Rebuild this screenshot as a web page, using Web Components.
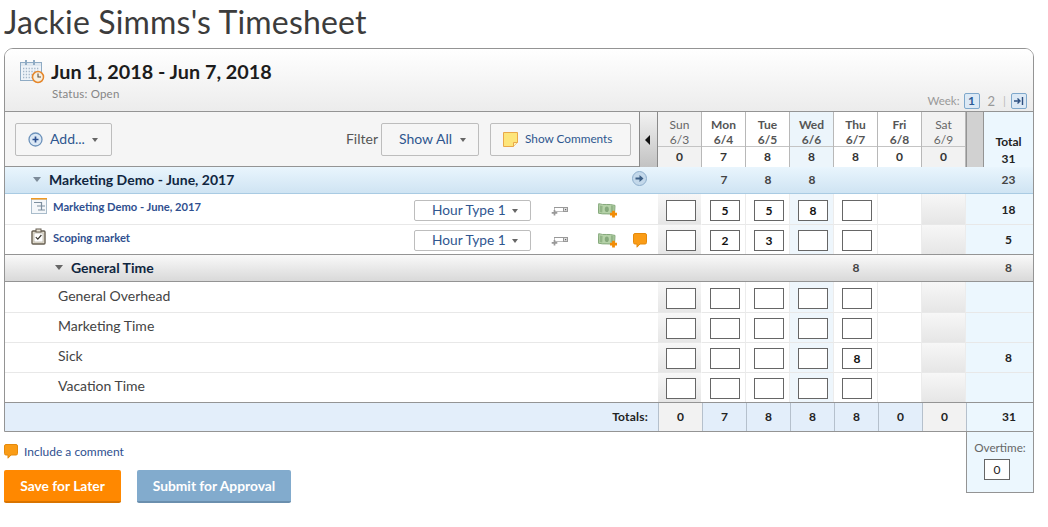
<!DOCTYPE html>
<html lang="en">
<head>
<meta charset="utf-8">
<title>Timesheet</title>
<style>
  html, body { margin: 0; background: #fff; }
  body { font-family: Lato, "Open Sans", sans-serif; color: #333; }
  ts-page { width: 1048px; }
</style>
</head>
<body>
<ts-page>
  <ts-title>Jackie Simms's Timesheet</ts-title>
  <ts-panel>
    <ts-header range="Jun 1, 2018 - Jun 7, 2018" status="Status: Open"></ts-header>
    <ts-toolbar></ts-toolbar>
    <ts-group-row label="Marketing Demo - June, 2017" hours="|7|8|8|||" total="23" tone="blue" link></ts-group-row>
    <ts-task-row label="Marketing Demo - June, 2017" icon="plan" hours="|5|5|8|" total="18" first></ts-task-row>
    <ts-task-row label="Scoping market" icon="task" hours="|2|3||" total="5" comment last></ts-task-row>
    <ts-group-row label="General Time" hours="||||8||" total="8" tone="gray" indent></ts-group-row>
    <ts-time-row label="General Overhead" hours="||||" first></ts-time-row>
    <ts-time-row label="Marketing Time" hours="||||"></ts-time-row>
    <ts-time-row label="Sick" hours="||||8" total="8"></ts-time-row>
    <ts-time-row label="Vacation Time" hours="||||" last></ts-time-row>
    <ts-totals-row values="0|7|8|8|8|0|0" total="31"></ts-totals-row>
  </ts-panel>
  <ts-footer></ts-footer>
</ts-page>

<script>
const ICONS = {
  calendar: `<svg width="25" height="25" viewBox="0 0 25 25"><rect x=".5" y="3.500" width="21" height="18" fill="#eef3f8" stroke="#8fabc4"/><rect x="1" y="4" width="20" height="3" fill="#dfe8f0"/><path d="M6 1v5M14 1v5" stroke="#8fabc4" stroke-width="2"/><path d="M3 9.500h16M3 12.500h16M3 15.500h11M3 18.500h9" stroke="#a3b6c8" stroke-width="1.300" stroke-dasharray="1.300 1.500"/><circle cx="18" cy="18" r="5.500" fill="#f7efe0" stroke="#e5862a" stroke-width="1.500"/><path d="M18 14.500V18h3" fill="none" stroke="#5b5042" stroke-width="1.100"/></svg>`,
  plan: `<svg width="16" height="16" viewBox="0 0 16 16"><rect x=".5" y="1" width="15" height="14.500" fill="#f4f7fa" stroke="#a9bccb"/><rect x="0" y="0" width="16" height="1.500" fill="#f09a22"/><path d="M3 4.500h7M6 8h8M7 12h7M10.500 4v8" stroke="#7d8f9e" stroke-width="1.200" fill="none"/></svg>`,
  task: `<svg width="15" height="17" viewBox="0 0 15 17"><rect x="1" y="3" width="13" height="13" rx="1" fill="#e9e4d6" stroke="#655d50" stroke-width="1.400"/><rect x="3" y="5" width="9" height="9" fill="#fff" stroke="#a9a294" stroke-width=".6"/><rect x="5" y="1" width="5" height="3" fill="#e9e4d6" stroke="#655d50"/><path d="M4.800 9.200l2 2 3.600-4.200" fill="none" stroke="#3d3a34" stroke-width="1.200"/></svg>`,
  key: `<svg width="17" height="10" viewBox="0 0 17 10"><rect x="3.500" y="1.500" width="9" height="4" fill="#fff" stroke="#bbb"/><path d="M3 1.500h9" stroke="#999"/><rect x="12.500" y="1.500" width="4" height="4" fill="#ddd" stroke="#999"/><rect x="14" y="3" width="1.200" height="1.200" fill="#666"/><path d="M3.500 4v5.500M.7 6.800h5.600" stroke="#999" stroke-width="1.700"/></svg>`,
  money: `<svg width="21" height="15" viewBox="0 0 21 15"><path d="M.7.700C6 2.500 10 .4 17 2.400l-.5 9.400C10 9.900 6 11.800.4 10.200z" fill="#b5d2a8" stroke="#84a87a"/><path d="M2 2.400l2.600.5-.3 6.600-2.600-.4zM13 2.600l2.600.6-.3 6.700-2.600-.6z" fill="#93b588"/><ellipse cx="8.800" cy="6.300" rx="2" ry="2.800" fill="#86a97c"/><path d="M15.500 7.700v6.800M12 11.100h7" stroke="#f28c05" stroke-width="2.800"/></svg>`,
  comment: `<svg width="14" height="15" viewBox="0 0 14 15"><path d="M2 .5h10A1.500 1.500 0 0 1 13.500 2v7.500A1.500 1.500 0 0 1 12 11H7l-3 3.200V11H2A1.500 1.500 0 0 1 .5 9.500V2A1.500 1.500 0 0 1 2 .5z" fill="#fa9c16" stroke="#e58a0c"/></svg>`,
  add: `<svg width="15" height="15" viewBox="0 0 15 15"><circle cx="7.500" cy="7.500" r="6.500" fill="#dbe8f5" stroke="#6e93bb" stroke-width="1.300"/><path d="M7.500 4.500v6M4.500 7.500h6" stroke="#2c4f8f" stroke-width="1.700"/></svg>`,
  note: `<svg width="15" height="15" viewBox="0 0 15 15"><path d="M.5.500h14v10l-4 4H.5z" fill="#fde57a" stroke="#e9a84a"/><path d="M10.500 14.500v-4h4" fill="#fff3b8" stroke="#e9a84a"/></svg>`,
  go: `<svg width="15" height="15" viewBox="0 0 15 15"><circle cx="7.500" cy="7.500" r="7" fill="#c3d8ea" stroke="#8eaecb"/><path d="M3.500 6.500h4v-2.500l4 3.500-4 3.500v-2.500h-4z" fill="#3d5f85"/></svg>`
};

const DAYS = [
  ["Sun", "6/3", "0"], ["Mon", "6/4", "7"], ["Tue", "6/5", "8"], ["Wed", "6/6", "8"],
  ["Thu", "6/7", "8"], ["Fri", "6/8", "0"], ["Sat", "6/9", "0"]
];

const ROW_CSS = `
  :host { display: grid; grid-template-columns: 653px repeat(7, 44px) 67px; box-sizing: border-box; }
  .main { display: flex; align-items: center; min-width: 0; }
  .day { box-sizing: border-box; border-right: 1px solid #ececec; border-bottom: 1px solid #e8e8e8; padding: 5px 0 0 8px; background: #fff; }
  .day.sun, .day.sat { background: linear-gradient(#f7f7f7, #e6e6e6); }
  .day.wed { background: #eef6fc; }
  .day.sun { border-right-color: #fff; }
  .total { box-sizing: border-box; background: #ecf7fe; border-bottom: 1px solid #e8e8e8; padding: 7px 0 0 18px; text-align: center; font: 700 12px/16px Lato, sans-serif; color: #222; }
  :host([first]) .total { padding-top: 8px; }
  .box { display: block; box-sizing: border-box; width: 30px; height: 21px; border: 1px solid #666; background: #fff; text-align: center; font: 700 12px/19px Lato, sans-serif; color: #111; }
`;

function dayCells(hours) {
  const names = ["sun", "", "", "wed", "", "", "sat"];
  const values = (hours || "").split("|");
  return names.map((cls, i) => {
    // Fri and Sat are not editable on this sheet
    const box = i < 5 ? `<span class="box">${values[i] || ""}</span>` : "";
    return `<div class="day ${cls}">${box}</div>`;
  }).join("");
}

class Base extends HTMLElement {
  connectedCallback() {
    if (this.shadowRoot) return;
    this.attachShadow({ mode: "open" }).innerHTML = this.render();
  }
}

class TsPage extends Base {
  render() {
    return `<style>:host { display: block; box-sizing: border-box; padding: 0 14px 0 4px; }</style><slot></slot>`;
  }
}

class TsTitle extends Base {
  render() {
    return `<style>
      :host { display: block; height: 48px; box-sizing: border-box; padding-top: 3px; font: 400 32px/38px Lato, sans-serif; color: #3c3c3c; letter-spacing: .18px; }
    </style><slot></slot>`;
  }
}

class TsPanel extends Base {
  render() {
    return `<style>
      :host { display: block; border: 1px solid #949494; border-radius: 9px 9px 0 0; overflow: hidden; }
    </style><slot></slot>`;
  }
}

class TsHeader extends Base {
  render() {
    return `<style>
      :host { display: flex; height: 63px; box-sizing: border-box; border-bottom: 1px solid #949494; background: linear-gradient(#fff, #ececec); padding: 10px 6px 0 15px; position: relative; }
      .icon { width: 31px; flex: none; }
      .text { flex: 1; }
      h1 { margin: 0; font: 700 19.800px/24px Lato, sans-serif; color: #1c1c1c; }
      p { margin: 3px 0 0 1px; font: 400 11.500px/16px Lato, sans-serif; color: #858585; letter-spacing: .2px; }
      .pager { align-self: flex-end; display: flex; align-items: center; margin-bottom: 2px; font: 400 11.500px/16px Lato, sans-serif; color: #999; }
      .pager b, .pager i { display: block; box-sizing: border-box; width: 16px; height: 16px; border: 1px solid #7fa8cb; border-radius: 2px; background: #dce9f5; color: #2d5b95; font: 700 12px/14px Lato, sans-serif; text-align: center; }
      .pager b { margin-left: 4px; }
      .two { margin-left: 8px; font-size: 13px; }
      .sep { margin: 0 5px 0 8px; color: #bbb; }
      .pager svg { display: block; margin: 2px; }
    </style>
    <div class="icon">${ICONS.calendar}</div>
    <div class="text"><h1>${this.getAttribute("range")}</h1><p>${this.getAttribute("status")}</p></div>
    <div class="pager">Week:<b>1</b><span class="two">2</span><span class="sep">|</span><i><svg width="10" height="10" viewBox="0 0 10 10"><path d="M0 5h5M3.500 2.500L6 5 3.500 7.500" fill="none" stroke="#2d4f80" stroke-width="1.400"/><path d="M8.500 1v8" stroke="#2d4f80" stroke-width="1.400"/></svg></i></div>`;
  }
}

class TsButton extends Base {
  render() {
    return `<style>
      :host { display: inline-flex; align-items: center; box-sizing: border-box; height: 33px; border: 1px solid #bdbdbd; border-radius: 2px; background: #f6f6f6; color: #2f568f; font: 400 14px Lato, sans-serif; }
      :host([small]) { font-size: 11.800px; }
      ::slotted(svg) { display: block; }
      ::slotted(span) { padding-bottom: 2px; }
    </style><slot></slot>`;
  }
}

class TsCaret extends Base {
  render() {
    return `<style>
      :host { display: inline-block; width: 0; height: 0; border: 3.500px solid transparent; border-top: 4px solid #666; border-bottom: 0; }
    </style>`;
  }
}

class TsToolbar extends Base {
  render() {
    const days = DAYS.map((d, i) => {
      const cls = i === 0 ? "sun" : i === 3 ? "wed" : i === 6 ? "sat" : "";
      return `<div class="head ${cls}"><span>${d[0]}<br>${d[1]}</span><strong>${d[2]}</strong></div>`;
    }).join("");
    return `<style>
      :host { display: grid; grid-template-columns: 634px 19px repeat(7, 44px) 18px 49px; height: 55px; box-sizing: border-box; border-bottom: 1px solid #949494; background: #f5f5f5; }
      .tools { display: flex; align-items: flex-start; padding: 11px 0 0 10px; }
      .add { width: 97px; padding-left: 12px; box-sizing: border-box; }
      .filter { margin-left: auto; padding-top: 8px; margin-right: 3px; font: 400 14px/16px Lato, sans-serif; color: #555; }
      .all { width: 98px; padding-left: 17px; box-sizing: border-box; }
      .comments { width: 141px; margin: 0 8px 0 11px; padding-left: 12px; box-sizing: border-box; }
      .label { margin: 0 7px 0 7px; }
      .all .label { margin: 0 8px 0 0; }
      .arrow { box-sizing: border-box; border: solid #8a8a8a; border-width: 0 1px; background: linear-gradient(#f2f2f2, #c2c2c2); display: flex; align-items: center; justify-content: center; }
      .arrow::before { content: ""; border: 5.500px solid transparent; border-right: 5px solid #111; border-left: 0; margin: 0 2px 0 0; }
      .head { box-sizing: border-box; display: flex; flex-direction: column; background: #fff; border-right: 1px solid #b8b8b8; font: 700 12px/15px Lato, sans-serif; color: #555; text-align: center; }
      .head span { display: block; height: 35px; box-sizing: border-box; padding-top: 5px; border-bottom: 1px solid #c4c4c4; }
      .head strong { display: block; font: 700 12px/20px Lato, sans-serif; color: #333; }
      .head.sun, .head.sat { background: #f2f2f2; font-weight: 400; color: #666; }
      .head.wed { background: #ecf5fb; }
      .bar { box-sizing: border-box; background: #d1d1d1; border: solid #949494; border-width: 0 1px 0 1px; }
      .total { background: #ecf7fe; text-align: center; padding-top: 21px; font: 700 12px/17px Lato, sans-serif; color: #222; }
    </style>
    <div class="tools">
      <ts-button class="add">${ICONS.add}<span class="label">Add...</span><ts-caret></ts-caret></ts-button>
      <div class="filter">Filter</div>
      <ts-button class="all"><span class="label">Show All</span><ts-caret></ts-caret></ts-button>
      <ts-button class="comments" small>${ICONS.note}<span class="label">Show Comments</span></ts-button>
    </div>
    <div class="arrow"></div>
    ${days}
    <div class="bar"></div>
    <div class="total">Total<br>31</div>`;
  }
}

class TsGroupRow extends Base {
  render() {
    const values = this.getAttribute("hours").split("|");
    const cells = DAYS.map((d, i) => `<div class="num">${values[i] || ""}</div>`).join("");
    const link = this.hasAttribute("link") ? `<span class="go">${ICONS.go}</span>` : "";
    return `<style>
      :host { display: grid; grid-template-columns: 653px repeat(7, 44px) 67px; height: 27px; box-sizing: border-box; align-items: center; font: 700 12px Lato, sans-serif; color: #444; }
      :host([tone=blue]) { background: linear-gradient(#e9f5fd, #cfe4f3); border-bottom: 1px solid #a9cbe3; padding-bottom: 2px; }
      :host([tone=gray]) { background: linear-gradient(#f9f9f9, #d9d9d9); border-bottom: 1px solid #949494; padding-bottom: 2px; }
      .main { display: flex; align-items: center; padding-left: 28px; font: 700 14px Lato, sans-serif; color: #10263f; position: relative; }
      :host([indent]) .main { padding-left: 50px; }
      .main::before { content: ""; border: 4px solid transparent; border-top: 5px solid #7d8b99; border-bottom: 0; margin-right: 8px; }
      :host([indent]) .main::before { border-top-color: #666; }
      .go { position: absolute; left: 627px; top: 0; }
      .go svg { display: block; }
      .num { text-align: center; }
      .total { padding-left: 18px; text-align: center; }
    </style>
    <div class="main">${this.getAttribute("label")}${link}</div>${cells}<div class="total">${this.getAttribute("total")}</div>`;
  }
}

class TsTaskRow extends Base {
  render() {
    const comment = this.hasAttribute("comment") ? `<span class="note">${ICONS.comment}</span>` : "";
    return `<style>
      ${ROW_CSS}
      :host { height: 30px; }
      :host([first]) { height: 31px; }
      :host([first]) .day { padding-top: 6px; }
      :host([last]) { height: 30px; border-bottom: 1px solid #949494; }
      :host([last]) .day, :host([last]) .total { border-bottom: 0; }
      .main { border-bottom: 1px solid #e8e8e8; background: #fff; position: relative; }
      :host([last]) .main { border-bottom: 0; }
      .pic { position: absolute; left: 26px; top: 3px; }
      :host([first]) .pic { top: 4px; }
      .pic svg, .tool svg, .note svg { display: block; }
      a { position: absolute; left: 48px; top: 5px; font: 700 11.200px/15px Lato, sans-serif; color: #2f4f8f; }
      ts-button { position: absolute; left: 409px; top: 5px; width: 117px; height: 21px; padding-left: 17px; box-sizing: border-box; background: #fff; font-size: 13.700px; }
      :host([first]) ts-button { top: 6px; }
      ts-button span { margin-right: 6px; }
      .key { position: absolute; left: 546px; top: 11px; }
      :host([first]) .key { top: 12px; }
      .money { position: absolute; left: 593px; top: 8px; }
      :host([first]) .money { top: 9px; }
      .note { position: absolute; left: 628px; top: 8px; }
    </style>
    <div class="main">
      <span class="pic">${ICONS[this.getAttribute("icon")]}</span>
      <a>${this.getAttribute("label")}</a>
      <ts-button><span>Hour Type 1</span><ts-caret></ts-caret></ts-button>
      <span class="tool key">${ICONS.key}</span>
      <span class="tool money">${ICONS.money}</span>
      ${comment}
    </div>
    ${dayCells(this.getAttribute("hours"))}
    <div class="total">${this.getAttribute("total") || ""}</div>`;
  }
}

class TsTimeRow extends Base {
  render() {
    return `<style>
      ${ROW_CSS}
      :host { height: 30px; }
      :host([first]) { height: 31px; }
      :host([last]) { height: 29px; }
      :host([first]) .day { padding-top: 6px; }
      .main { box-sizing: border-box; padding: 0 0 4px 53px; border-bottom: 1px solid #e8e8e8; background: #fff; font: 400 14px Lato, sans-serif; color: #444; }
      :host([last]) .main, :host([last]) .day, :host([last]) .total { border-bottom: 0; }
    </style>
    <div class="main">${this.getAttribute("label")}</div>
    ${dayCells(this.getAttribute("hours"))}
    <div class="total">${this.getAttribute("total") || ""}</div>`;
  }
}

class TsTotalsRow extends Base {
  render() {
    const cells = this.getAttribute("values").split("|").map((v, i) => {
      const cls = i === 0 || i === 6 ? "off" : "";
      return `<div class="num ${cls}">${v}</div>`;
    }).join("");
    return `<style>
      :host { display: grid; grid-template-columns: 653px repeat(7, 44px) 67px; height: 29px; box-sizing: border-box; border-top: 1px solid #949494; background: #e3eefa; font: 700 12px/28px Lato, sans-serif; color: #222; }
      .main { text-align: right; padding-right: 10px; letter-spacing: .2px; }
      .num { text-align: center; border-left: 1px solid #b5c0cc; }
      .off { background: #f2f2f2; }
      .total { background: #ecf7fe; text-align: center; padding-left: 18px; border-left: 1px solid #b5c0cc; }
    </style>
    <div class="main">Totals:</div>${cells}<div class="total">${this.getAttribute("total")}</div>`;
  }
}

class TsFooter extends Base {
  render() {
    return `<style>
      :host { display: flex; justify-content: space-between; align-items: flex-start; }
      .comment { display: flex; align-items: center; gap: 6px; margin-top: 12px; font: 400 12px/14px Lato, sans-serif; color: #2f4f8f; }
      .comment svg { display: block; }
      .actions { display: flex; gap: 16px; margin-top: 11px; }
      button { height: 33px; padding: 0; border: 0; border-bottom: 2px solid; border-radius: 2px; color: #fff; font: 700 13.800px Lato, sans-serif; }
      .save { width: 117px; background: #ff8800; border-color: #d97400; }
      .submit { width: 154px; background: #82abcd; border-color: #6b8fae; }
      .overtime { box-sizing: border-box; width: 68px; height: 61px; border: 1px solid #949494; border-top: 0; background: #ecf7fe; text-align: center; padding-top: 8px; font: 400 11.700px/14px Lato, sans-serif; color: #666; }
      .overtime span { display: block; box-sizing: border-box; width: 26px; height: 21px; margin: 5px 0 0 17px; border: 1px solid #666; background: #fff; font: 400 12px/19px Lato, sans-serif; color: #222; }
    </style>
    <div>
      <div class="comment">${ICONS.comment}Include a comment</div>
      <div class="actions"><button class="save">Save for Later</button><button class="submit">Submit for Approval</button></div>
    </div>
    <div class="overtime">Overtime:<span>0</span></div>`;
  }
}

customElements.define("ts-page", TsPage);
customElements.define("ts-title", TsTitle);
customElements.define("ts-panel", TsPanel);
customElements.define("ts-header", TsHeader);
customElements.define("ts-button", TsButton);
customElements.define("ts-caret", TsCaret);
customElements.define("ts-toolbar", TsToolbar);
customElements.define("ts-group-row", TsGroupRow);
customElements.define("ts-task-row", TsTaskRow);
customElements.define("ts-time-row", TsTimeRow);
customElements.define("ts-totals-row", TsTotalsRow);
customElements.define("ts-footer", TsFooter);
</script>
</body>
</html>
